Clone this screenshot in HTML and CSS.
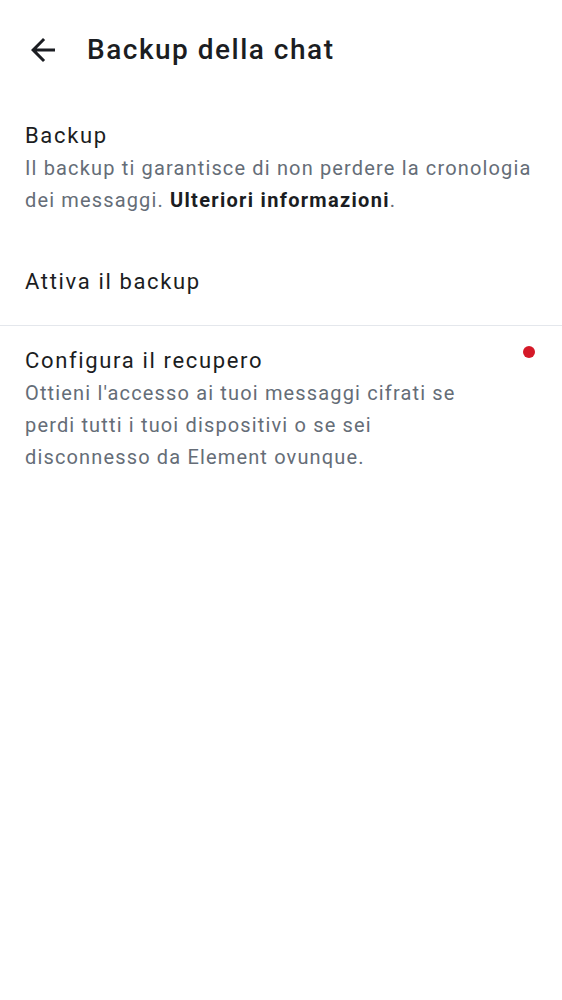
FILE: index.html
```html
<!DOCTYPE html>
<html lang="it">
<head>
<meta charset="utf-8">
<title>Backup della chat</title>
<link rel="stylesheet" href="styles.css">
</head>
<body>
<div class="screen">
  <header class="appbar">
    <button class="back" aria-label="Indietro">
      <svg viewBox="0 0 24 24" width="36" height="36"><path d="M20 11H7.83l5.59-5.59L12 4l-8 8 8 8 1.41-1.41L7.83 13H20v-2z" fill="#1b1d22"/></svg>
    </button>
    <h1 class="title">Backup della chat</h1>
  </header>

  <section class="item first">
    <div class="item-text">
      <div class="item-title">Backup</div>
      <p class="item-sub">Il backup ti garantisce di non perdere la cronologia dei messaggi. <b class="link">Ulteriori informazioni</b>.</p>
    </div>
  </section>

  <section class="item single">
    <div class="item-text">
      <div class="item-title">Attiva il backup</div>
    </div>
  </section>

  <hr class="divider">

  <section class="item recovery">
    <div class="item-text">
      <div class="item-title">Configura il recupero</div>
      <p class="item-sub">Ottieni l'accesso ai tuoi messaggi cifrati se perdi tutti i tuoi dispositivi o se sei disconnesso da Element ovunque.</p>
    </div>
    <span class="dot"></span>
  </section>
</div>
</body>
</html>
```

FILE: styles.css
```css
html, body {
  margin: 0;
  padding: 0;
  background: #ffffff;
}
body {
  font-family: Roboto, "Noto Sans", sans-serif;
  color: #1b1d22;
}
.screen {
  width: 562px;
  min-height: 1000px;
}
.appbar {
  display: flex;
  align-items: center;
  height: 100px;
  padding-left: 25px;
}
.back {
  width: 36px;
  height: 36px;
  padding: 0;
  border: 0;
  background: none;
  display: flex;
}
.title {
  margin: 0 0 0 26px;
  font-size: 28px;
  font-weight: 500;
  letter-spacing: 1.5px;
  line-height: 36px;
  color: #1b1d22;
}
.item {
  display: flex;
  align-items: flex-start;
  padding: 0 25px;
}
.item-text {
  flex: 1;
  min-width: 0;
}
.item-title {
  font-size: 22px;
  letter-spacing: 1.65px;
  line-height: 32px;
  color: #1b1d22;
}
.item-sub {
  margin: 0;
  font-size: 20px;
  letter-spacing: 1.15px;
  line-height: 32px;
  color: #656d77;
}
.item-sub .link {
  font-weight: 700;
  letter-spacing: 1.3px;
  color: #1b1d22;
}
.first {
  padding-top: 20px;
  padding-bottom: 22px;
}
.single {
  padding-top: 28px;
  padding-bottom: 27px;
}
.divider {
  margin: 0;
  border: 0;
  height: 1px;
  background: #e4e7ec;
}
.recovery {
  padding-top: 19px;
  padding-bottom: 20px;
}
.recovery .item-text {
  flex: none;
  width: 445px;
}
.dot {
  flex: none;
  width: 12px;
  height: 12px;
  border-radius: 50%;
  background: #d51928;
  margin-top: 1px;
  margin-left: auto;
  margin-right: 2px;
}
```
